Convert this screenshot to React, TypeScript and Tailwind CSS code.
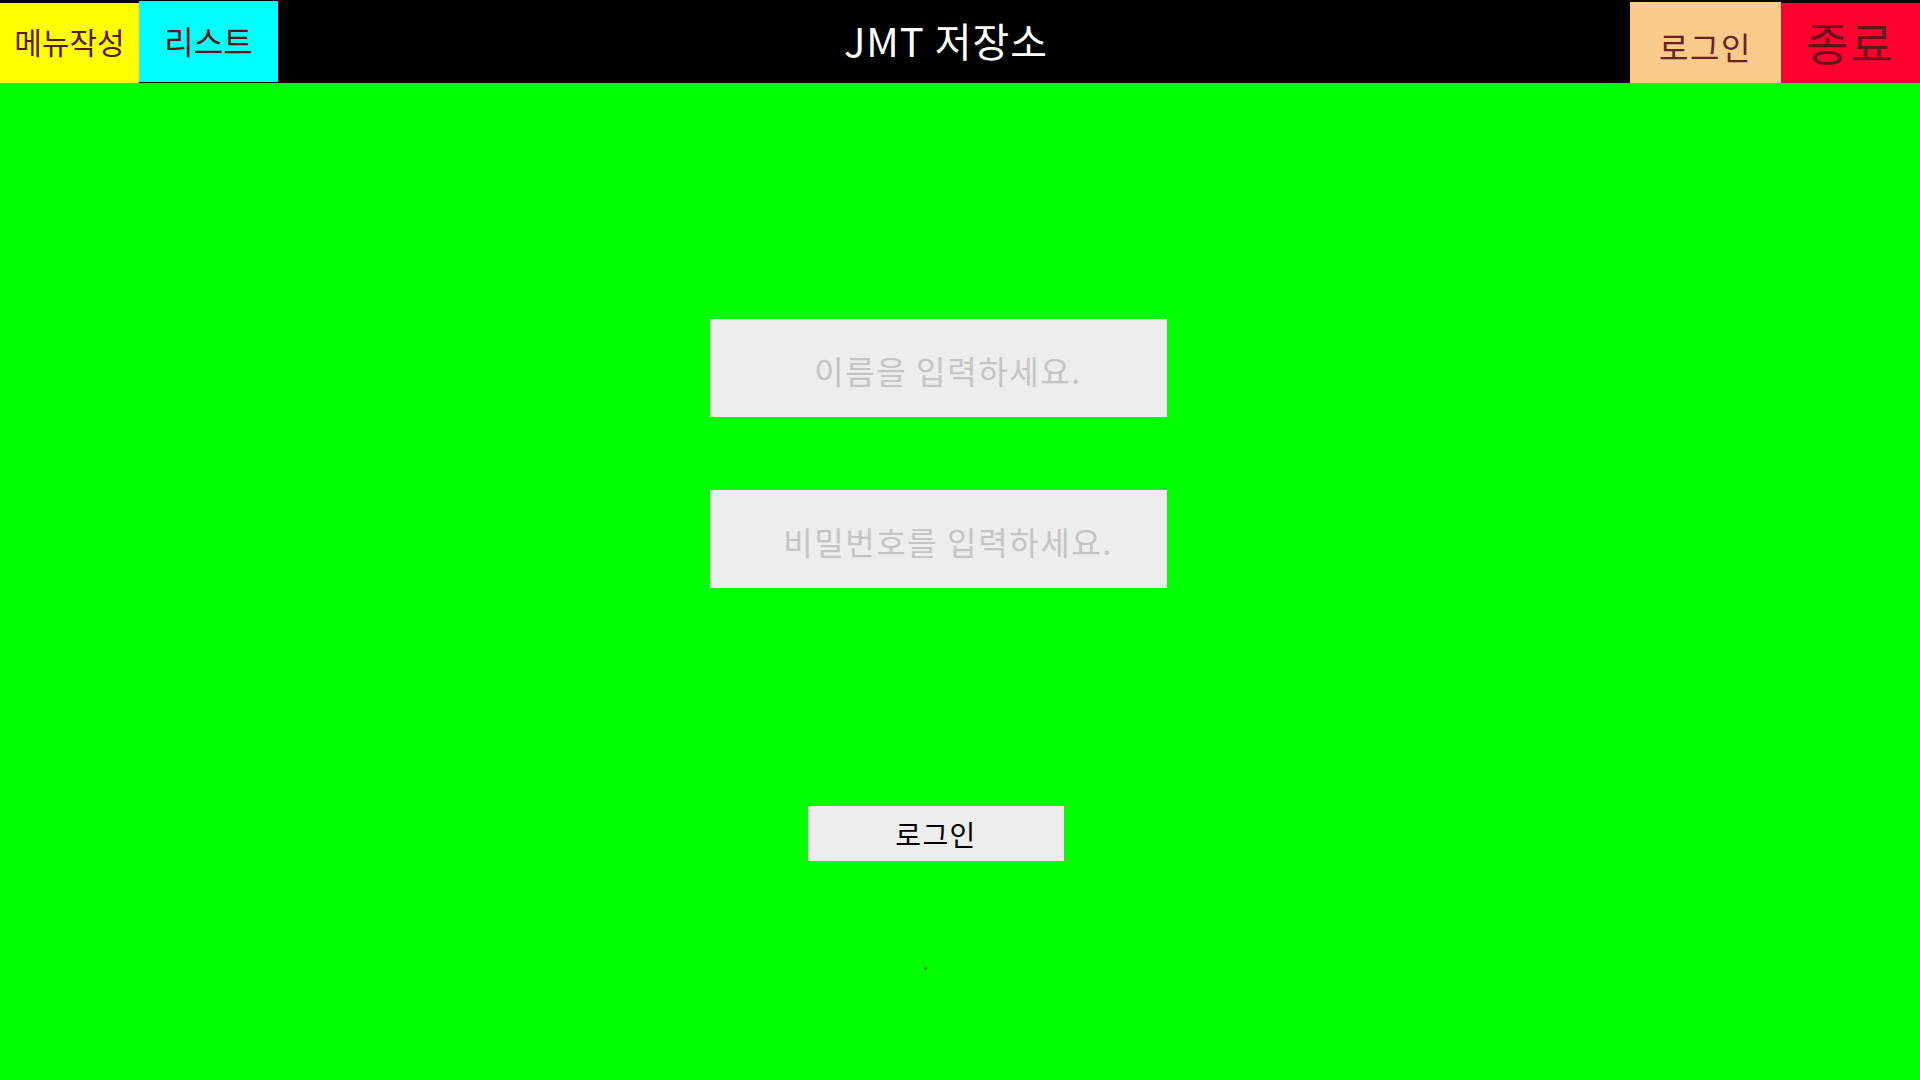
import React, { useState } from 'react';

const App: React.FC = () => {
  const [name, setName] = useState('');
  const [password, setPassword] = useState('');

  return (
    <div
      className="min-h-screen w-full bg-[#00ff00] flex flex-col"
      style={{ fontFamily: '"Noto Sans CJK KR", "Noto Sans", sans-serif' }}
    >
      {/* Header */}
      <header className="h-[83px] bg-black flex items-end">
        <button className="w-[139px] h-[80px] bg-[#ffff00] text-[#5c1616] text-[30px] flex items-center justify-center pb-[4px]">
          메뉴작성
        </button>
        <button className="w-[139px] h-[81px] mb-[1px] bg-[#00ffff] text-[#5c1616] text-[32px] flex items-center justify-center pb-[4px]">
          리스트
        </button>
        <div className="flex-1 h-full flex items-center justify-center pr-[16px] pb-[4px]">
          <h1 className="text-white text-[40px] tracking-wide">JMT 저장소</h1>
        </div>
        <button className="w-[151px] h-[81px] bg-[#f9cb8b] text-[#6b2222] text-[32px] tracking-wider flex items-center justify-center pt-[6px]">
          로그인
        </button>
        <button className="w-[139px] h-[80px] bg-[#ff0030] text-[#6b1018] text-[46px] tracking-wider flex items-center justify-center pb-[4px]">
          종료
        </button>
      </header>

      {/* Login form */}
      <main className="flex-1 flex flex-col items-center pr-[44px] pt-[236px]">
        <input
          value={name}
          onChange={(e) => setName(e.target.value)}
          placeholder="이름을 입력하세요."
          className="w-[457px] h-[98px] bg-[#ededed] text-center text-[32px] pl-[20px] pt-[4px] tracking-wider outline-none placeholder:text-[#c4c4c4]"
        />
        <input
          type="password"
          value={password}
          onChange={(e) => setPassword(e.target.value)}
          placeholder="비밀번호를 입력하세요."
          className="mt-[73px] w-[457px] h-[98px] bg-[#ededed] text-center text-[32px] pl-[20px] pt-[4px] tracking-wider outline-none placeholder:text-[#c4c4c4]"
        />
        <button className="mt-[218px] mr-[4px] w-[256px] h-[55px] bg-[#ededed] text-black text-[28px] tracking-wider flex items-center justify-center">
          로그인
        </button>
        <span className="mt-[106px] mr-[26px] w-[3px] h-[3px] rounded-full bg-[#2a7a2a]" />
      </main>
    </div>
  );
};

export default App;
